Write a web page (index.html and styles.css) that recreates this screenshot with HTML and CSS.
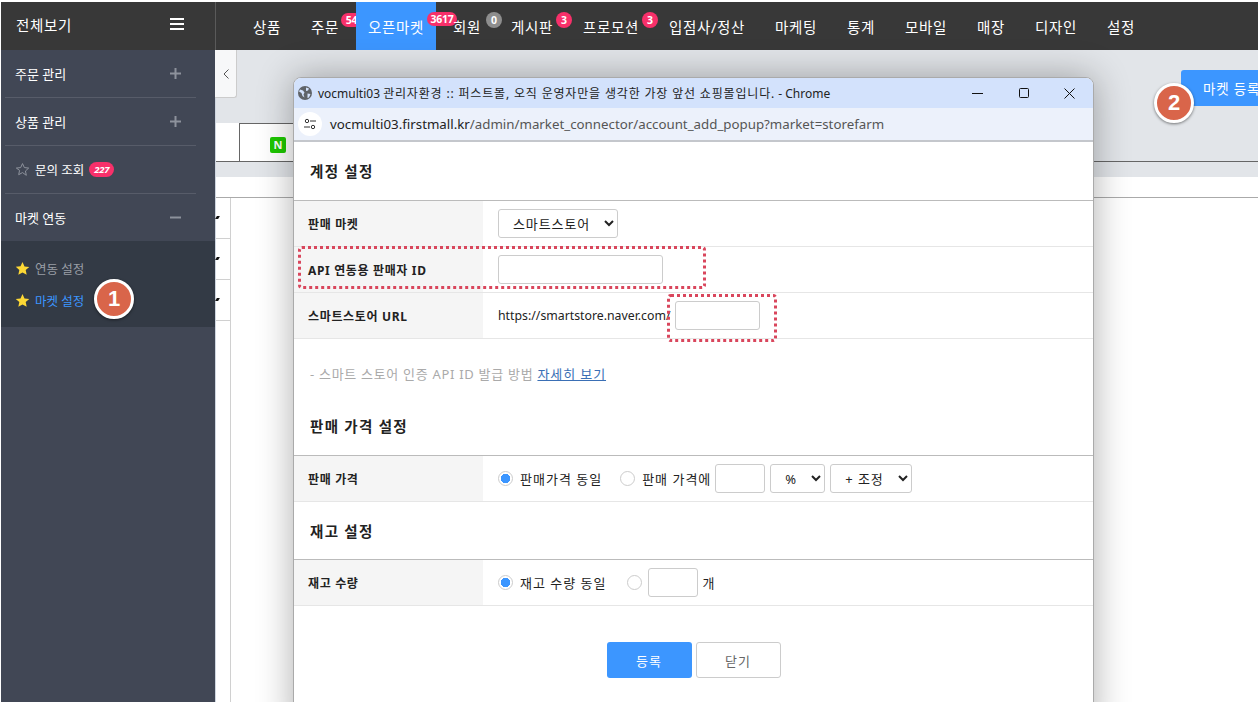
FILE: index.html
```html
<!DOCTYPE html>
<html lang="ko">
<head>
<meta charset="utf-8">
<title>마켓 설정</title>
<link rel="stylesheet" href="styles.css">
</head>
<body>
<div class="app">
  <header class="topbar">
    <div class="allview">
      <span>전체보기</span>
      <svg class="burger" width="14" height="12" viewBox="0 0 14 12"><path d="M0 1h14M0 6h14M0 11h14" stroke="#fff" stroke-width="2"/></svg>
    </div>
    <nav class="gnb">
      <a class="gnb-item">상품</a>
      <a class="gnb-item">주문<b class="pill pill-54">54</b></a>
      <a class="gnb-item gnb-active">오픈마켓<b class="pill pill-3617">3617</b></a>
      <a class="gnb-item">회원<b class="dot dot-gray">0</b></a>
      <a class="gnb-item">게시판<b class="dot">3</b></a>
      <a class="gnb-item">프로모션<b class="dot">3</b></a>
      <a class="gnb-item">입점사/정산</a>
      <a class="gnb-item">마케팅</a>
      <a class="gnb-item">통계</a>
      <a class="gnb-item">모바일</a>
      <a class="gnb-item">매장</a>
      <a class="gnb-item">디자인</a>
      <a class="gnb-item">설정</a>
    </nav>
  </header>

  <aside class="side">
    <div class="side-row side-line"><span>주문 관리</span><svg width="11" height="11" viewBox="0 0 11 11"><path d="M0 5.500h11M5.500 0v11" stroke="#8d929c" stroke-width="2"/></svg></div>
    <div class="side-row side-line"><span>상품 관리</span><svg width="11" height="11" viewBox="0 0 11 11"><path d="M0 5.500h11M5.500 0v11" stroke="#8d929c" stroke-width="2"/></svg></div>
    <div class="side-row side-line side-inq">
      <svg width="15" height="15" viewBox="0 0 24 24"><path d="M12 2.500l2.900 6.400 7 .8-5.200 4.700 1.400 6.900L12 16.900 5.900 20.300l1.400-6.900L2.100 9.700l7-.8z" fill="none" stroke="#8d929c" stroke-width="1.600"/></svg>
      <span>문의 조회</span><b class="pill pill-227">227</b>
    </div>
    <div class="side-row"><span>마켓 연동</span><svg width="11" height="11" viewBox="0 0 11 11"><path d="M0 5.500h11" stroke="#8d929c" stroke-width="2"/></svg></div>
    <div class="side-sub">
      <div class="sub-item"><svg width="15" height="15" viewBox="0 0 24 24"><path d="M12 1.500l3.200 7.100 7.600.8-5.700 5.100 1.600 7.600L12 18.300l-6.700 3.800 1.600-7.600-5.700-5.100 7.600-.8z" fill="#fdd835"/></svg><span>연동 설정</span></div>
      <div class="sub-item sub-on"><svg width="15" height="15" viewBox="0 0 24 24"><path d="M12 1.500l3.200 7.100 7.600.8-5.700 5.100 1.600 7.600L12 18.300l-6.700 3.800 1.600-7.600-5.700-5.100 7.600-.8z" fill="#fdd835"/></svg><span>마켓 설정</span></div>
    </div>
  </aside>

  <main class="main">
    <div class="toolbar"><button class="add-market" type="button">마켓 등록</button></div>
    <div class="tabs"><div class="tab"><span class="naver">N</span></div></div>
    <div class="band"></div>
    <div class="list">
      <div class="list-head"></div>
      <div class="list-col">
        <div class="list-row"><i class="tick"></i></div>
        <div class="list-row"><i class="tick"></i></div>
        <div class="list-row"><i class="tick"></i></div>
      </div>
    </div>
  </main>

  <button class="collapse" type="button" aria-label="접기"><svg width="6" height="10" viewBox="0 0 6 10"><path d="M5.500 .5L1 5l4.500 4.500" fill="none" stroke="#555" stroke-width="1"/></svg></button>

  <section class="popup">
    <div class="win-title">
      <svg width="14" height="14" viewBox="0 0 14 14"><circle cx="7" cy="7" r="7" fill="#5f6368"/><path d="M2 3.500l3 1 1.500 2-1 2 1 3L4.500 10 3.500 7 1 5.500zM8 1.500l3 1-1 2-2 .5zM9.500 7.500l3 .5-1.500 3.500-1.500.5z" fill="#d3e2fc"/></svg>
      <span class="win-text">vocmulti03 <span class="win-ko">관리자환경 :: 퍼스트몰, 오직 운영자만을 생각한 가장 앞선 쇼핑몰입니다.</span> - Chrome</span>
      <div class="win-ctrl">
        <svg width="11" height="11" viewBox="0 0 11 11"><path d="M0 5.500h11" stroke="#111"/></svg>
        <svg width="11" height="11" viewBox="0 0 11 11"><rect x="1.500" y=".5" width="9" height="9" rx="1" fill="none" stroke="#111"/></svg>
        <svg width="11" height="11" viewBox="0 0 11 11"><path d="M.5 .5l10 10M10.500 .5l-10 10" stroke="#111"/></svg>
      </div>
    </div>
    <div class="win-addr">
      <span class="addr-icon"><svg width="12" height="12" viewBox="0 0 12 12"><circle cx="3" cy="3" r="1.700" fill="none" stroke="#333"/><path d="M6 3h6M0 9h6" stroke="#333"/><circle cx="9" cy="9" r="1.700" fill="none" stroke="#333"/></svg></span>
      <span class="addr-url"><span class="addr-host">vocmulti03.firstmall.kr</span>/admin/market_connector/account_add_popup?market=storefarm</span>
    </div>
    <form class="form">
      <h2 class="sec-h">계정 설정</h2>
      <div class="f-table">
        <div class="f-row">
          <div class="f-label">판매 마켓</div>
          <div class="f-val"><select class="sel sel-market"><option>스마트스토어</option></select></div>
        </div>
        <div class="f-row">
          <div class="f-label">API 연동용 판매자 ID</div>
          <div class="f-val"><input class="txt txt-id" type="text"></div>
        </div>
        <div class="f-row">
          <div class="f-label">스마트스토어 URL</div>
          <div class="f-val"><span class="url-pre">https://smartstore.naver.com/</span><input class="txt txt-url" type="text"></div>
        </div>
      </div>
      <p class="note">- 스마트 스토어 인증 API ID 발급 방법 <a class="note-link">자세히 보기</a></p>
      <h2 class="sec-h sec-h2">판매 가격 설정</h2>
      <div class="f-table">
        <div class="f-row">
          <div class="f-label">판매 가격</div>
          <div class="f-val">
            <label class="rad"><input type="radio" name="price" checked><span>판매가격 동일</span></label>
            <label class="rad rad-b"><input type="radio" name="price"><span>판매 가격에</span></label>
            <input class="txt txt-num" type="text">
            <select class="sel sel-unit"><option>%</option></select>
            <select class="sel sel-adj"><option>+ 조정</option></select>
          </div>
        </div>
      </div>
      <h2 class="sec-h sec-h3">재고 설정</h2>
      <div class="f-table">
        <div class="f-row">
          <div class="f-label">재고 수량</div>
          <div class="f-val">
            <label class="rad"><input type="radio" name="stock" checked><span>재고 수량 동일</span></label>
            <label class="rad rad-c"><input type="radio" name="stock"></label>
            <input class="txt txt-stock" type="text">
            <span class="unit">개</span>
          </div>
        </div>
      </div>
      <div class="actions">
        <button class="btn btn-pri" type="button">등록</button>
        <button class="btn btn-sec" type="button">닫기</button>
      </div>
    </form>
  </section>

  <div class="mark mark-id"></div>
  <div class="mark mark-url"></div>
  <div class="step step-1">1</div>
  <div class="step step-2">2</div>
</div>
</body>
</html>
```
FILE: styles.css
```css
* { box-sizing: border-box; }
html, body { background: #fff; }
body { margin: 0; padding: 2px 0 0 1px; height: 723px; overflow: hidden; font-family: "Noto Sans", "Noto Sans CJK KR", sans-serif; color: #222; }
b { font-weight: 700; }

.app { position: relative; width: 1257px; height: 700px; overflow: hidden; display: grid; grid-template-columns: 214px 1fr; grid-template-rows: 48px 1fr; }

/* top bar */
.topbar { grid-column: 1 / 3; display: flex; background: #383838; color: #fff; font-size: 14.500px; letter-spacing: .66px; }
.allview { width: 215px; flex: none; display: flex; align-items: center; justify-content: space-between; padding: 0 31px 4px 15px; border-right: 1px solid #5a5a5a; }
.burger { margin-top: 0; }
.gnb { display: flex; padding-left: 22px; }
.gnb-item { position: relative; display: flex; align-items: center; padding: 2px 15px 0; height: 48px; white-space: nowrap; line-height: 1; }
.gnb-active { background: #3c96ff; padding: 2px 12px 0; margin: 0 2px; }
.pill { position: absolute; background: #f8306a; color: #fff; font-size: 10.500px; font-weight: 700; line-height: 14px; height: 14px; border-radius: 7px; text-align: center; letter-spacing: -.3px; }
.pill-54 { left: 45px; top: 11px; width: 21px; }
.pill-3617 { left: 71px; top: 10px; width: 30px; }
.dot { position: absolute; top: 10px; left: 48px; width: 16px; height: 16px; border-radius: 50%; background: #f8306a; color: #fff; font-size: 10.500px; line-height: 16px; text-align: center; letter-spacing: 0; }
.gnb-item:nth-child(5) .dot { left: 60px; }
.gnb-item:nth-child(6) .dot { left: 74px; }
.dot-gray { background: #8e8e8e; }

/* sidebar */
.side { background: #414755; color: #fff; font-size: 13px; display: flex; flex-direction: column; }
.side-row { position: relative; height: 48px; display: flex; align-items: center; justify-content: space-between; padding: 0 34px 2px 14px; flex: none; }
.side-line::after { content: ""; position: absolute; left: 4px; right: 19px; bottom: 0; height: 1px; background: #575c69; }
.side-inq { justify-content: flex-start; gap: 5px; font-size: 12.500px; }
.pill-227 { position: static; width: 25px; height: 15px; line-height: 15px; margin-left: 0; font-size: 9.500px; font-style: italic; border-radius: 8px; }
.side-sub { background: #333a45; height: 86px; padding-top: 11px; margin-top: -1px; }
.sub-item { height: 32px; display: flex; align-items: center; gap: 5px; padding-left: 14px; color: #9a9ea6; font-size: 12.500px; }
.sub-on { color: #3c96ff; }

/* main */
.main { background: #e2e5e9; display: flex; flex-direction: column; border-left: 1px solid #cfd6e0; }
.toolbar { height: 73px; flex: none; display: flex; justify-content: flex-end; padding-top: 20px; overflow: hidden; }
.add-market { width: 77px; height: 36px; border: 0; border-radius: 3px 0 0 0; background: #3c96ff; color: #fff; font: 13.500px "Noto Sans", "Noto Sans CJK KR", sans-serif; letter-spacing: .8px; padding: 0 0 0 22px; text-align: left; white-space: nowrap; overflow: hidden; }
.tabs { height: 39px; flex: none; border-bottom: 1px solid #666; display: flex; padding-left: 23px; background: linear-gradient(90deg, #fff 78px, #e2e5e9 78px); }
.tab { width: 160px; background: #fff; border: 1px solid #666; border-bottom: 0; padding: 13px 0 0 30px; }
.naver { display: block; width: 16px; height: 16px; border-radius: 2px; background: #1ec800; color: #fff; font-size: 11px; font-weight: 700; line-height: 16px; text-align: center; }
.band { height: 15px; flex: none; }
.list { flex: 1; background: #fff; }
.list-head { height: 21px; border-bottom: 1px solid #aaa; }
.list-col { width: 14px; height: 100%; border-right: 1px solid #d0d0d0; box-sizing: content-box; }
.list-row { height: 41px; border-bottom: 1px solid #d0d0d0; padding: 18px 0 0 0; }
.tick { display: block; width: 3px; height: 3px; background: #111; transform: skewX(-30deg); }

.collapse { position: absolute; left: 214px; top: 48px; width: 22px; height: 48px; padding: 0; background: #f7f8f9; border: 1px solid #ccc; border-left: 0; border-top: 0; border-radius: 0 0 3px 0; display: flex; align-items: center; justify-content: center; }

/* popup window */
.popup { position: absolute; left: 292px; top: 75px; width: 801px; height: 660px; background: #fff; border: 1px solid #aaa; border-radius: 8px 8px 0 0; box-shadow: 0 0 36px rgba(0,0,0,.32); overflow: hidden; }
.win-title { height: 30px; background: #d3e2fc; display: flex; align-items: center; padding-left: 4px; font-size: 12px; color: #222; }
.win-text { margin-left: 6px; white-space: nowrap; }
.win-ko { letter-spacing: .83px; }
.win-ctrl { margin-left: auto; display: flex; gap: 35px; padding-right: 18px; }
.win-addr { height: 34px; background: #ecf1fb; display: flex; align-items: center; padding-left: 4px; border-bottom: 2px solid #c4c7cc; font-size: 13.300px; color: #555; }
.addr-icon { width: 24px; height: 24px; border-radius: 50%; background: #fff; display: flex; align-items: center; justify-content: center; flex: none; }
.addr-url { margin-left: 8px; white-space: nowrap; }
.addr-host { color: #222; }

.form { font-size: 12px; color: #222; }
.sec-h { margin: 0; height: 59px; display: flex; align-items: center; padding: 0 0 1px 16px; font-size: 14.500px; letter-spacing: 1.300px; font-weight: 700; border-bottom: 1px solid #bbb; }
.sec-h3 { height: 58px; }
.f-row { display: flex; height: 46px; border-bottom: 1px solid #e6e6e6; }
.f-label { width: 189px; background: #f5f5f5; display: flex; align-items: center; padding-left: 14px; font-weight: 700; font-size: 12px; letter-spacing: .65px; flex: none; }
.f-val { display: flex; align-items: center; padding-left: 15px; flex: 1; font-size: 13px; letter-spacing: 1px; }
.sel, .txt { height: 29px; border: 1px solid #ccc; border-radius: 3px; background: #fff; font: 13px "Noto Sans", "Noto Sans CJK KR", sans-serif; letter-spacing: .9px; color: #222; }
.sel-market { width: 120px; padding-left: 10px; }
.txt-id { width: 165px; }
.url-pre { white-space: nowrap; font-size: 12.300px; letter-spacing: 0; }
.txt-url { width: 85px; margin-left: 4px; }
.note { margin: 0; height: 58px; padding: 25px 0 0 16px; color: #aaa; font-size: 13px; letter-spacing: .7px; line-height: 20px; }
.note-link { color: #3a6fb5; text-decoration: underline; letter-spacing: .9px; }
.rad { display: flex; align-items: center; gap: 7px; white-space: nowrap; }
.rad input { appearance: none; margin: 0; width: 15px; height: 15px; border-radius: 50%; border: 1px solid #ccc; background: #fff; flex: none; }
.rad input:checked { background: radial-gradient(circle, #3c96ff 0 4.500px, #fff 5px); }
.rad-b { margin-left: 18px; }
.rad-c { margin-left: 20px; }
.txt-num { width: 50px; margin-left: 4px; }
.sel-unit { width: 55px; margin-left: 5px; padding-left: 10px; }
.sel-adj { width: 82px; margin-left: 5px; padding-left: 10px; }
.txt-stock { width: 50px; margin-left: 6px; }
.unit { margin-left: 5px; }
.actions { display: flex; justify-content: center; gap: 4px; padding: 36px 0 0; }
.btn { width: 85px; height: 36px; border-radius: 3px; font: 13px "Noto Sans", "Noto Sans CJK KR", sans-serif; letter-spacing: 1px; }
.btn-pri { background: #3c96ff; border: 0; color: #fff; }
.btn-sec { background: #fff; border: 1px solid #ccc; color: #666; }

/* annotations */
.mark { position: absolute; border: 3px dotted #d9465c; border-radius: 4px; }
.mark-id { left: 297px; top: 244px; width: 408px; height: 43px; }
.mark-url { left: 666px; top: 292px; width: 110px; height: 48px; }
.step { position: absolute; width: 40px; height: 40px; border-radius: 50%; border: 3px solid #fff; background: #d9654a; color: #fff; font-size: 22px; font-weight: 700; display: flex; align-items: center; justify-content: center; box-shadow: 0 1px 3px rgba(0,0,0,.5); font-family: "Liberation Sans", sans-serif; }
.step-1 { left: 93px; top: 277px; }
.step-2 { left: 1153px; top: 81px; }
```
